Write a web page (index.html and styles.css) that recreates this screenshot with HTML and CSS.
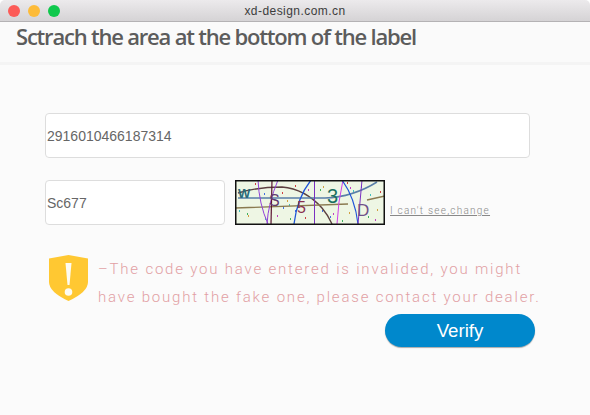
FILE: index.html
```html
<!DOCTYPE html>
<html lang="en">
<head>
<meta charset="utf-8">
<title>xd-design.com.cn</title>
<link rel="stylesheet" href="styles.css">
</head>
<body>
<div class="window">
  <div class="titlebar">
    <div class="lights">
      <span class="light red"></span>
      <span class="light yellow"></span>
      <span class="light green"></span>
    </div>
    <div class="site">xd-design.com.cn</div>
  </div>
  <div class="header"><h1>Sctrach the area at the bottom of the label</h1></div>
  <div class="content">
    <div class="field wide">2916010466187314</div>
    <div class="code-row">
      <div class="field short">Sc677</div>
      <svg class="captcha" viewBox="0 0 150 45" width="150" height="45" aria-label="captcha">
        <rect x="0.5" y="0.5" width="149" height="44" fill="#eef6e4"/>
        <g class="dots">
          <path fill="#d04040" d="M20 3h1v2h-1zM60 5h1v2h-1zM47 12h1v2h-1zM70 37h1v2h-1zM145 11h1v2h-1zM112 2h1v2h-1z"/>
          <path fill="#40b060" d="M12 33h1v2h-1zM55 38h1v2h-1zM107 40h1v2h-1zM133 36h1v2h-1zM85 9h1v2h-1z"/>
          <path fill="#3f6fe0" d="M48 27h1v2h-1zM29 13h1v2h-1zM87 30h1v2h-1zM126 6h1v2h-1zM95 36h1v2h-1zM60 30h1v2h-1z"/>
          <path fill="#d0a040" d="M88 6h1v2h-1zM13 35h1v2h-1zM114 32h1v2h-1zM142 29h1v2h-1zM52 20h1v2h-1z"/>
          <path fill="#c040c0" d="M98 33h1v2h-1zM42 35h1v2h-1zM73 9h1v2h-1zM140 39h1v2h-1zM115 7h1v2h-1z"/>
          <path fill="#40c0c0" d="M118 10h1v2h-1zM54 24h1v2h-1zM30 38h1v2h-1zM135 14h1v2h-1zM4 30h1v2h-1z"/>
        </g>
        <g fill="none">
          <path d="M3 13 Q22 7 47 7 Q70 9 87 28 Q93 35 97 44" stroke="#5c4040" stroke-width="1.4"/>
          <path d="M3 18 H90 Q118 17 142 2" stroke="#5a7fa8" stroke-width="1.5"/>
          <path d="M0 28 L113 24 M132 20 L150 16" stroke="#8a7a50" stroke-width="1.4"/>
          <path d="M23 0 Q24 24 33 44" stroke="#9040d8"/>
          <path d="M43 0 Q33 24 32 44" stroke="#9040d8"/>
          <path d="M37 0 L36 44" stroke="#5a1430" stroke-width="1.2"/>
          <path d="M76 0 Q62 18 59 44" stroke="#1f55d8" stroke-width="1.3"/>
          <path d="M79.500 0 V44" stroke="#7a30c0"/>
          <path d="M108 0 Q103 22 102 44" stroke="#d040e8"/>
          <path d="M107 0 Q120 18 123 44" stroke="#1f55d8" stroke-width="1.2"/>
          <path d="M127 0 L123 44" stroke="#7a30c0"/>
        </g>
        <text x="3" y="18" class="cap c1">W</text>
        <text x="34" y="26" class="cap c2">S</text>
        <text x="62" y="33" class="cap c3">5</text>
        <text x="92" y="23" class="cap c4">3</text>
        <text x="122" y="36" class="cap c5">D</text>
        <rect x="0.75" y="0.75" width="148.500" height="43.500" fill="none" stroke="#111" stroke-width="1.5"/>
      </svg>
      <a class="change">I can't see,change</a>
    </div>
    <div class="notice">
      <svg class="shield" viewBox="0 0 39 46" width="39" height="46">
        <path d="M19.500 0 L39 3.500 V27 Q39 37 19.500 46 Q0 37 0 27 V3.500 Z" fill="#ffc832"/>
        <path d="M16.500 8 H22.500 L20.500 30 H18.500 Z" fill="#fdfbf2"/>
        <circle cx="19.500" cy="37" r="3.800" fill="#fdfbf2"/>
      </svg>
      <p>–The code you have entered is invalided, you might have bought the fake one, please contact your dealer.</p>
    </div>
    <div class="actions"><button class="verify">Verify</button></div>
  </div>
</div>
</body>
</html>
```
FILE: styles.css
```css
* { box-sizing: border-box; }
html, body { margin: 0; height: 100%; }
body { background: #fff; font-family: "Liberation Sans", sans-serif; overflow: hidden; }
.window { width: 590px; height: 415px; background: #fbfbfb; border-radius: 5px 5px 0 0; overflow: hidden; }
.titlebar {
  position: relative; height: 22px;
  background: linear-gradient(#eceaec, #d5d3d5);
  border-bottom: 1px solid #b4b2b4;
  display: flex; align-items: center; justify-content: center;
}
.lights { position: absolute; left: 8px; top: 5px; display: flex; gap: 8px; }
.light { width: 12px; height: 12px; border-radius: 50%; }
.red { background: #fc5b57; }
.yellow { background: #fdbb39; }
.green { background: #0fc84c; }
.site { font-size: 12px; letter-spacing: 0.45px; color: #3c3c3c; }
.header { height: 43px; padding: 0 0 0 16px; border-bottom: 3px solid #f4f4f4; background: #fafafa; }
h1 { margin: 0; font: 600 22px/28px "Open Sans", sans-serif; letter-spacing: -1.2px; color: #5c5c5c; }
.content { padding: 48px 0 0 45px; }
.field {
  height: 45px; background: #fff; border: 1px solid #ddd; border-radius: 4px;
  display: flex; align-items: center; padding-left: 1px;
  font-size: 14px; color: #666;
}
.wide { width: 485px; }
.code-row { display: flex; align-items: flex-end; margin-top: 22px; }
.short { width: 180px; }
.captcha { display: block; margin-left: 10px; }
.cap { font: 16px "Liberation Sans", sans-serif; }
.c1 { fill: #2a6a7a; font-size: 13px; font-weight: 700; }
.c2 { fill: #603a70; }
.c3 { fill: #8a3050; }
.c4 { fill: #1a7060; font-size: 20px; }
.c5 { fill: #70508a; font-size: 17px; }
.change { margin: 0 0 8px 5px; font: 300 10px/12px "Roboto", sans-serif; letter-spacing: 1.25px; color: #888; text-decoration: underline; }
.notice { display: flex; align-items: flex-start; margin-top: 30px; margin-left: 4px; }
.shield { flex: none; margin-right: 10px; }
.notice p {
  margin: 0; width: 448px;
  font: 300 15px/28px "Roboto", sans-serif; letter-spacing: 1.8px; color: #e2a0a4;
}
.actions { width: 490px; display: flex; justify-content: flex-end; margin-top: 3px; }
.verify {
  width: 150px; height: 33px; border: 0; border-radius: 17px;
  background: #0088cc; color: #fff; font: 18.700px "Liberation Sans", sans-serif;
  box-shadow: 0 1px 1px #aaa;
}
```
